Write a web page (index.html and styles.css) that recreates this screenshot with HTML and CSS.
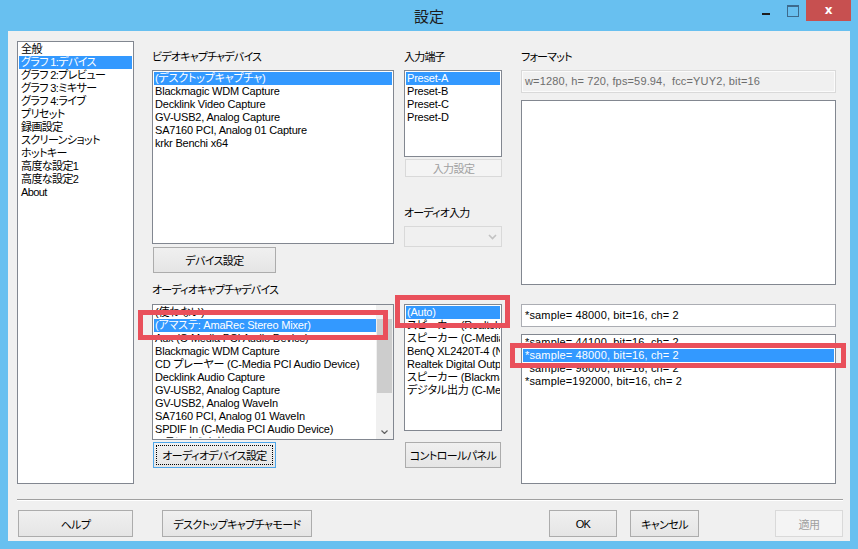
FILE: index.html
```html
<!DOCTYPE html>
<html lang="ja">
<head>
<meta charset="utf-8">
<title>設定</title>
<link rel="stylesheet" href="styles.css">
</head>
<body>
<div class="window">
  <div class="titlebar">
    <div class="title">設定</div>
    <div class="caption">
      <span class="cap-btn cap-min"></span>
      <span class="cap-btn cap-max"></span>
      <span class="cap-btn cap-close">x</span>
    </div>
  </div>
  <div class="client">
    <div class="main">
      <ul class="listbox sidebar">
        <li>全般</li>
        <li class="sel">グラフ 1:デバイス</li>
        <li>グラフ 2:プレビュー</li>
        <li>グラフ 3:ミキサー</li>
        <li>グラフ 4:ライブ</li>
        <li>プリセット</li>
        <li>録画設定</li>
        <li>スクリーンショット</li>
        <li>ホットキー</li>
        <li>高度な設定1</li>
        <li>高度な設定2</li>
        <li>About</li>
      </ul>

      <div class="col col-video">
        <div class="label">ビデオキャプチャデバイス</div>
        <ul class="listbox video-list">
          <li class="sel">(デスクトップキャプチャ)</li>
          <li>Blackmagic WDM Capture</li>
          <li>Decklink Video Capture</li>
          <li>GV-USB2, Analog Capture</li>
          <li>SA7160 PCI, Analog 01 Capture</li>
          <li>krkr Benchi x64</li>
        </ul>
        <button class="btn btn-dev">デバイス設定</button>
        <div class="label label-audio">オーディオキャプチャデバイス</div>
        <div class="listbox audio-list">
          <ul class="items">
            <li>(使わない)</li>
            <li class="sel">(アマステ: AmaRec Stereo Mixer)</li>
            <li>Aux (C-Media PCI Audio Device)</li>
            <li>Blackmagic WDM Capture</li>
            <li>CD プレーヤー (C-Media PCI Audio Device)</li>
            <li>Decklink Audio Capture</li>
            <li>GV-USB2, Analog Capture</li>
            <li>GV-USB2, Analog WaveIn</li>
            <li>SA7160 PCI, Analog 01 WaveIn</li>
            <li>SPDIF In (C-Media PCI Audio Device)</li>
            <li>ステレオ ミキサー (C-Media PCI Audio Device)</li>
          </ul>
          <div class="scrollbar">
            <span class="arrow"><svg width="7" height="4" viewBox="0 0 7 4"><path d="M0.5 3.5 L3.5 0.5 L6.5 3.5" fill="none" stroke="#606060" stroke-width="1.2"/></svg></span>
            <span class="thumb"></span>
            <span class="track"></span>
            <span class="arrow"><svg width="7" height="4" viewBox="0 0 7 4"><path d="M0.5 0.5 L3.5 3.5 L6.5 0.5" fill="none" stroke="#606060" stroke-width="1.2"/></svg></span>
          </div>
        </div>
        <button class="btn btn-focus btn-dev2">オーディオデバイス設定</button>
      </div>

      <div class="col col-mid">
        <div class="label">入力端子</div>
        <ul class="listbox input-list">
          <li class="sel">Preset-A</li>
          <li>Preset-B</li>
          <li>Preset-C</li>
          <li>Preset-D</li>
        </ul>
        <button class="btn btn-disabled btn-input">入力設定</button>
        <div class="label label-ain">オーディオ入力</div>
        <div class="combo">
          <svg width="9" height="6" viewBox="0 0 9 6"><path d="M1 1 L4.5 4.5 L8 1" fill="none" stroke="#c2c2c2" stroke-width="1.6"/></svg>
        </div>
        <ul class="listbox out-list">
          <li class="sel">(Auto)</li>
          <li>スピーカー (Realtek High Definition Audio)</li>
          <li>スピーカー (C-Media PCI Audio Device)</li>
          <li>BenQ XL2420T-4 (NVIDIA High Definition Audio)</li>
          <li>Realtek Digital Output (Realtek High Definition Audio)</li>
          <li>スピーカー (Blackmagic Audio)</li>
          <li>デジタル出力 (C-Media PCI Audio Device)</li>
        </ul>
        <button class="btn btn-panel">コントロールパネル</button>
      </div>

      <div class="col col-fmt">
        <div class="label">フォーマット</div>
        <div class="field field-disabled">w=1280, h= 720, fps=59.94,  fcc=YUY2, bit=16</div>
        <ul class="listbox fmt-list"></ul>
        <div class="field field-sample">*sample= 48000, bit=16, ch= 2</div>
        <ul class="listbox sample-list">
          <li>*sample= 44100, bit=16, ch= 2</li>
          <li class="sel">*sample= 48000, bit=16, ch= 2</li>
          <li>*sample= 96000, bit=16, ch= 2</li>
          <li>*sample=192000, bit=16, ch= 2</li>
        </ul>
      </div>
    </div>

    <div class="separator"></div>

    <div class="footer">
      <button class="btn btn-help">ヘルプ</button>
      <button class="btn btn-desk">デスクトップキャプチャモード</button>
      <button class="btn btn-ok">OK</button>
      <button class="btn btn-cancel">キャンセル</button>
      <button class="btn btn-disabled btn-apply">適用</button>
    </div>

    <div class="mark mark-audio"></div>
    <div class="mark mark-out"></div>
    <div class="mark mark-sample"></div>
  </div>
</div>
</body>
</html>
```

FILE: styles.css
```css
* { box-sizing: border-box; }
html, body { margin: 0; padding: 0; }
body {
  width: 858px;
  height: 549px;
  overflow: hidden;
  background: #68c0f0;
  font-family: "Liberation Sans", "Noto Sans CJK JP", sans-serif;
  font-size: 11px;
  font-feature-settings: "palt";
  color: #000;
}
.window {
  width: 858px;
  height: 549px;
  background: #68c0f0;
  display: flex;
  flex-direction: column;
}

/* title bar */
.titlebar {
  height: 31px;
  display: grid;
  grid-template-columns: 1fr auto 1fr;
  align-items: start;
}
.title {
  grid-column: 2;
  font-family: "Noto Sans CJK JP", sans-serif;
  font-size: 15px;
  line-height: 31px;
  color: #1c1c1c;
}
.caption {
  grid-column: 3;
  justify-self: end;
  display: flex;
  margin-right: 7px;
}
.cap-btn {
  height: 21px;
  display: flex;
  align-items: center;
  justify-content: center;
}
.cap-min { width: 27px; }
.cap-min::before {
  content: "";
  width: 8px;
  height: 2px;
  margin-top: 6px;
  background: #1e1e1e;
}
.cap-max { width: 27px; }
.cap-max::before {
  content: "";
  width: 10px;
  height: 9px;
  border: 1px solid #3d6a8c;
  border-top-width: 2px;
}
.cap-close {
  width: 45px;
  background: #c75050;
  color: #fff;
  font-family: "DejaVu Sans", sans-serif;
  font-weight: bold;
  font-size: 12px;
  line-height: 21px;
}

/* client area */
.client {
  position: relative;
  margin: 0 8px;
  height: 510px;
  background: #f0f0f0;
  padding: 10px 7px 4px 9px;
}
.main {
  display: flex;
  height: 443px;
  padding-right: 7px;
}
.listbox {
  margin: 0;
  padding: 1px;
  list-style: none;
  background: #fff;
  border: 1px solid #828790;
  overflow: hidden;
  letter-spacing: -0.2px;
}
.listbox li {
  height: 13px;
  line-height: 13px;
  padding-left: 1px;
  white-space: pre;
  overflow: hidden;
}
.listbox li.sel {
  background: #3399ff;
  color: #fff;
}
.sidebar {
  width: 117px;
  height: 443px;
  margin-right: 18px;
  letter-spacing: -0.6px;
}
.sidebar li { padding-left: 2px; }

.col {
  display: flex;
  flex-direction: column;
  align-items: flex-start;
}
.col-video { width: 242px; margin-right: 10px; }
.col-mid { width: 98px; margin-right: 19px; }
.col-fmt { width: 315px; }

.label {
  height: 13px;
  line-height: 13px;
  margin: 10px 0 6px;
  white-space: nowrap;
  letter-spacing: -0.8px;
}
.label-audio { margin: 11px 0 7px; }
.label-ain { margin: 30px 0 6px; }

/* buttons */
.btn {
  display: flex;
  align-items: center;
  justify-content: center;
  padding: 0;
  margin: 0;
  font: inherit;
  font-feature-settings: "palt";
  letter-spacing: -0.6px;
  color: #000;
  background: linear-gradient(#f0f0f0, #e5e5e5);
  border: 1px solid #acacac;
  border-radius: 0;
  white-space: nowrap;
}
.btn-disabled {
  color: #a0a0a0;
  background: #f4f4f4;
  border-color: #d9d9d9;
}
.btn-focus {
  border-color: #4ea6ea;
  outline: 1px dotted #000;
  outline-offset: -4px;
}

.video-list { width: 242px; height: 174px; }
.btn-dev { width: 123px; height: 26px; margin: 3px 0 0 1px; }

.audio-list {
  width: 242px;
  height: 136px;
  display: flex;
  padding: 1px 0 1px 1px;
}
.audio-list .items {
  flex: 1;
  margin: 0;
  padding: 0;
  list-style: none;
  overflow: hidden;
}
.scrollbar {
  width: 17px;
  display: flex;
  flex-direction: column;
  align-items: center;
  background: #f0f0f0;
  margin-top: -1px;
  margin-bottom: -1px;
}
.scrollbar .arrow {
  height: 14px;
  width: 17px;
  display: flex;
  align-items: center;
  justify-content: center;
  background: #f0f0f0;
}
.scrollbar .thumb {
  width: 15px;
  height: 74px;
  background: #cdcdcd;
}
.scrollbar .track { flex: 1; }
.btn-dev2 { width: 123px; height: 26px; margin: 2px 0 0 1px; }

.input-list { width: 98px; height: 87px; }
.btn-input { width: 97px; height: 18px; margin: 2px 0 0 1px; }
.combo {
  width: 98px;
  height: 21px;
  border: 1px solid #d9d9d9;
  background: #f0f0f0;
  display: flex;
  align-items: center;
  justify-content: flex-end;
  padding-right: 4px;
}
.out-list { width: 98px; height: 127px; margin-top: 57px; }
.btn-panel { width: 96px; height: 26px; margin: 11px 0 0 1px; }

.field {
  width: 315px;
  height: 23px;
  line-height: 21px;
  padding-left: 3px;
  white-space: pre;
  overflow: hidden;
  letter-spacing: 0.15px;
}
.field-disabled {
  color: #6d6d6d;
  background: #f0f0f0;
  border: 1px solid #d9d9d9;
  box-shadow: inset 0 0 0 1px #fbfbfb;
}
.fmt-list { width: 315px; height: 185px; margin-top: 7px; }
.field-sample {
  margin-top: 19px;
  background: #fff;
  border: 1px solid #abadb3;
}
.sample-list { width: 315px; height: 150px; margin-top: 7px; letter-spacing: 0.15px; }
.sample-list li { padding-left: 2px; }

/* footer */
.separator {
  margin-top: 15px;
  height: 2px;
  border-top: 1px solid #a0a0a0;
  border-bottom: 1px solid #ffffff;
}
.footer {
  display: flex;
  margin-top: 9px;
  height: 27px;
}
.footer .btn { height: 27px; }
.btn-help { width: 115px; margin-left: 1px; }
.btn-desk { width: 150px; margin-left: 29px; }
.btn-ok { width: 68px; margin-left: auto; }
.btn-cancel { width: 69px; margin-left: 13px; }
.btn-apply { width: 68px; margin-left: 76px; }

/* red annotation marks */
.mark {
  position: absolute;
  border: 5px solid #e9505b;
}
.mark-audio { left: 130px; top: 279px; width: 250px; height: 30px; }
.mark-out { left: 387px; top: 264px; width: 115px; height: 33px; }
.mark-sample { left: 502px; top: 312px; width: 336px; height: 25px; }
```
